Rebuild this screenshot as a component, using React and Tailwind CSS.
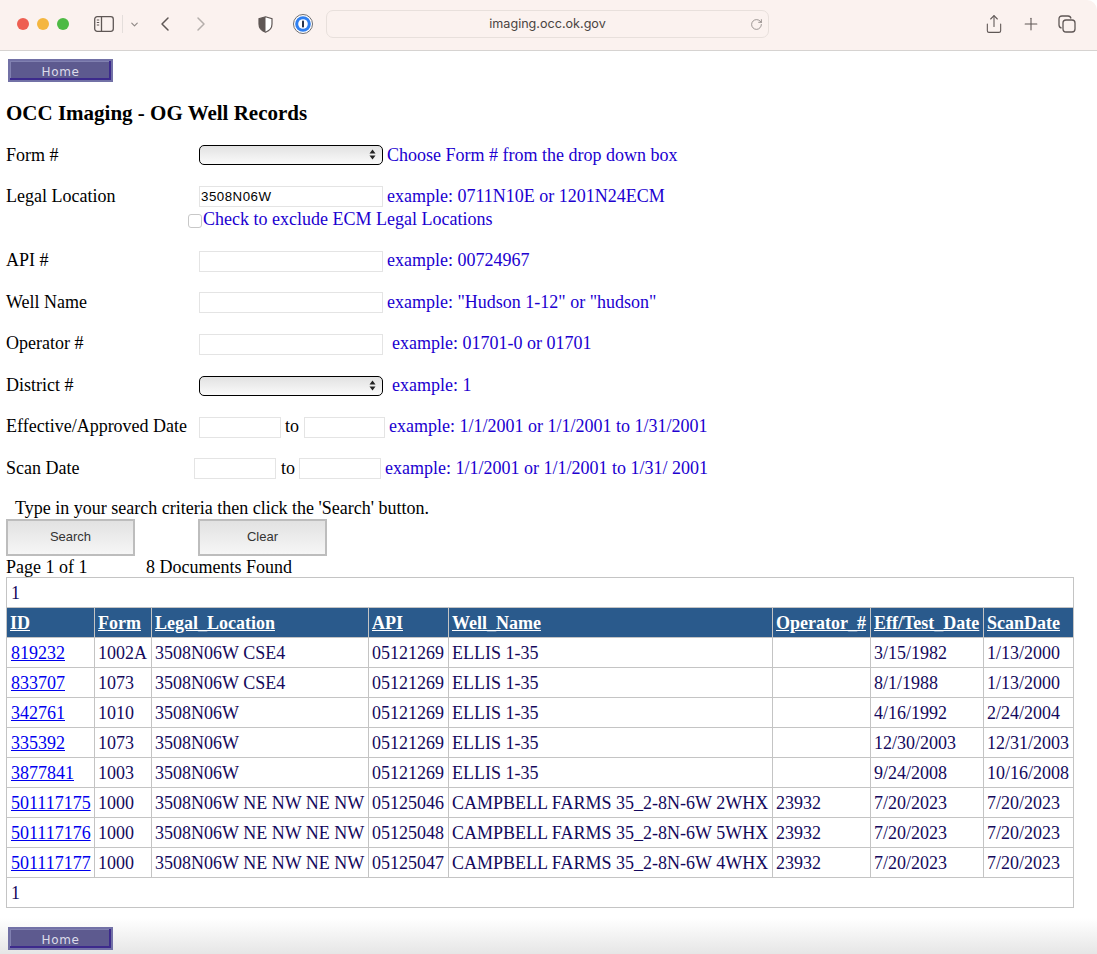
import { ChevronDown, ChevronLeft, ChevronRight, Plus, RotateCw, Share } from "lucide-react";

const records = [
  ["819232", "1002A", "3508N06W CSE4", "05121269", "ELLIS 1-35", "", "3/15/1982", "1/13/2000"],
  ["833707", "1073", "3508N06W CSE4", "05121269", "ELLIS 1-35", "", "8/1/1988", "1/13/2000"],
  ["342761", "1010", "3508N06W", "05121269", "ELLIS 1-35", "", "4/16/1992", "2/24/2004"],
  ["335392", "1073", "3508N06W", "05121269", "ELLIS 1-35", "", "12/30/2003", "12/31/2003"],
  ["3877841", "1003", "3508N06W", "05121269", "ELLIS 1-35", "", "9/24/2008", "10/16/2008"],
  ["501117175", "1000", "3508N06W NE NW NE NW", "05125046", "CAMPBELL FARMS 35_2-8N-6W 2WHX", "23932", "7/20/2023", "7/20/2023"],
  ["501117176", "1000", "3508N06W NE NW NE NW", "05125048", "CAMPBELL FARMS 35_2-8N-6W 5WHX", "23932", "7/20/2023", "7/20/2023"],
  ["501117177", "1000", "3508N06W NE NW NE NW", "05125047", "CAMPBELL FARMS 35_2-8N-6W 4WHX", "23932", "7/20/2023", "7/20/2023"],
];

const headers = [
  ["ID", "w-[88px]"],
  ["Form", "w-[57px]"],
  ["Legal_Location", "w-[217px]"],
  ["API", "w-[80px]"],
  ["Well_Name", "w-[324px]"],
  ["Operator_#", "w-[98px]"],
  ["Eff/Test_Date", "w-[113px]"],
  ["ScanDate", "w-[90px]"],
];

const Toolbar = () => (
  <div className="h-[51px] pb-[2px] bg-[#fbf2ef] border-b border-[#d6d3d1] flex items-center rounded-tr-[10px] text-[#5f5755] shrink-0">
    <div className="flex items-center gap-[8px] ml-[17px]">
      <span className="w-[12px] h-[12px] rounded-full bg-[#ee5f52]" />
      <span className="w-[12px] h-[12px] rounded-full bg-[#f4b63f]" />
      <span className="w-[12px] h-[12px] rounded-full bg-[#4dba45]" />
    </div>
    <svg className="ml-[25px]" width="20" height="16" viewBox="0 0 20 16" fill="none" stroke="#5f5755" strokeWidth="1.3">
      <rect x="0.7" y="0.7" width="18.6" height="14.6" rx="2.5" />
      <path d="M7.5 1v14" />
      <path d="M2.8 4h2.4M2.8 6.5h2.4M2.8 9h2.4" strokeWidth="1" />
    </svg>
    <span className="ml-[8px] w-px h-[18px] bg-[#e4dedb]" />
    <ChevronDown className="ml-[6px] text-[#8f8986]" size={11} strokeWidth={2.5} />
    <ChevronLeft className="ml-[13px]" size={24} strokeWidth={1.5} />
    <ChevronRight className="ml-[12px] text-[#b4aeab]" size={24} strokeWidth={1.5} />
    <svg className="ml-[45px]" width="15" height="17" viewBox="0 0 15 17">
      <path d="M7.5 0.8 L14 2.8 V8 C14 12 11 15 7.5 16.2 C4 15 1 12 1 8 V2.8 Z" fill="#fff" stroke="#5f5755" strokeWidth="1.2" />
      <path d="M7.5 0.8 L1 2.8 V8 C1 12 4 15 7.5 16.2 Z" fill="#5f5755" />
    </svg>
    <svg className="ml-[20px]" width="20" height="20" viewBox="0 0 20 20">
      <circle cx="10" cy="10" r="9.5" fill="#fff" stroke="#6d6d70" strokeWidth="1" />
      <circle cx="10" cy="10" r="7.8" fill="#2f7ff0" />
      <circle cx="10" cy="10" r="4.8" fill="#fff" />
      <rect x="9" y="6.5" width="2" height="7" rx="0.8" fill="#26324a" />
    </svg>
    <div className="ml-[13px] w-[443px] h-[28px] rounded-[7px] border border-[#e8e0dc] bg-[#fbf2ef] flex items-center relative">
      <span className="flex-1 text-center text-[12.6px] text-[#4a4442] font-['Inter',sans-serif]">imaging.occ.ok.gov</span>
      <RotateCw className="absolute right-[5px] text-[#7f7977]" size={13} strokeWidth={1.4} />
    </div>
    <Share className="ml-[215px]" size={20} strokeWidth={1.3} />
    <Plus className="ml-[17px]" size={20} strokeWidth={1.3} />
    <svg className="ml-[17px]" width="18" height="18" viewBox="0 0 18 18" fill="none" stroke="#5f5755" strokeWidth="1.3">
      <rect x="5" y="5" width="12" height="12" rx="3" />
      <path d="M13 3.5 C12.7 2 11.8 1 10 1 H4 C2 1 1 2 1 4 V10 C1 11.8 2 12.7 3.5 13" />
    </svg>
  </div>
);

const HomeButton = () => (
  <a className="block w-[105px] h-[23px] bg-[#5d5a8f] border-2 border-[#7271a6] shadow-[inset_-2px_-2px_0_#3c2a8c,inset_1px_1px_0_#8080b0] text-center text-[12px] leading-[23px] tracking-[0.6px] text-[#dcdcea] font-['DejaVu_Sans',sans-serif]">
    Home
  </a>
);

const Hint = ({ className = "", lift = "pb-[2px]", children }) => (
  <span className={`text-[#2000d0] ${lift} ${className}`}>{children}</span>
);

const TextBox = ({ className = "w-[184px]", value = "" }) => (
  <input
    readOnly
    value={value}
    className={`h-[21px] bg-white border border-[#e4e4e4] px-[1px] text-[13.3px] tracking-[0.5px] text-black font-['Liberation_Sans',sans-serif] ${className}`}
  />
);

const SelectBox = () => (
  <span className="w-[184px] h-[20px] rounded-[5px] border border-black bg-gradient-to-b from-[#e2e2e2] via-[#eeeeee] to-[#fafafa] flex items-center justify-end pr-[6px]">
    <svg width="7" height="11" viewBox="0 0 7 11" fill="#222">
      <path d="M3.5 0.5 L6.5 4.5 H0.5 Z M3.5 10.5 L0.5 6.5 H6.5 Z" />
    </svg>
  </span>
);

const Row = ({ label, children, labelWidth = "w-[193px]", lift = "pb-[2px]" }) => (
  <div className="flex items-center h-[41.5px]">
    <span className={`${labelWidth} shrink-0 text-black ${lift}`}>{label}</span>
    {children}
  </div>
);

export default function App() {
  return (
    <div className="w-[1097px] h-[954px] overflow-hidden flex flex-col bg-white font-['Liberation_Serif',serif] text-[18px] leading-[20px]">
      <Toolbar />
      <div className="pl-[8px] pt-[8px]">
        <HomeButton />
      </div>
      <div className="pl-[6px]">
        <h1 className="font-bold text-[21px] leading-[24px] mt-[19px] mb-[9px] text-black">OCC Imaging - OG Well Records</h1>

        <Row label="Form #" lift="">
          <SelectBox />
          <Hint className="ml-[4px]" lift="">Choose Form # from the drop down box</Hint>
        </Row>
        <Row label="Legal Location" lift="">
          <TextBox value="3508N06W" />
          <Hint className="ml-[4px]" lift="">example: 0711N10E or 1201N24ECM</Hint>
        </Row>
        <div className="flex items-center h-[3px] pl-[182px] mb-[3px] relative">
          <span className="w-[14px] h-[14px] mt-[5px] rounded-[3px] border border-[#c8c8c8] bg-white shrink-0" />
          <Hint className="ml-[1px]" lift="">Check to exclude ECM Legal Locations</Hint>
        </div>
        <div className="h-[17.5px]" />
        <Row label="API #">
          <TextBox />
          <Hint className="ml-[4px]">example: 00724967</Hint>
        </Row>
        <Row label="Well Name">
          <TextBox />
          <Hint className="ml-[4px]">example: "Hudson 1-12" or "hudson"</Hint>
        </Row>
        <Row label="Operator #">
          <TextBox />
          <Hint className="ml-[9px]">example: 01701-0 or 01701</Hint>
        </Row>
        <Row label="District #">
          <SelectBox />
          <Hint className="ml-[9px]">example: 1</Hint>
        </Row>
        <Row label="Effective/Approved Date">
          <TextBox className="w-[82px]" />
          <span className="ml-[4px] mr-[4px] w-[15px] text-black pb-[2px]">to</span>
          <TextBox className="w-[81px]" />
          <Hint className="ml-[4px]">example: 1/1/2001 or 1/1/2001 to 1/31/2001</Hint>
        </Row>
        <Row label="Scan Date" labelWidth="w-[188px]">
          <TextBox className="w-[82px]" />
          <span className="ml-[5px] mr-[4px] w-[14px] text-black pb-[2px]">to</span>
          <TextBox className="w-[82px]" />
          <Hint className="ml-[4px]">example: 1/1/2001 or 1/1/2001 to 1/31/ 2001</Hint>
        </Row>

        <p className="pl-[9px] text-black mt-[8.5px] mb-[1px]">Type in your search criteria then click the 'Search' button.</p>
        <div className="flex gap-[63px]">
          {["Search", "Clear"].map((label) => (
            <span
              key={label}
              className="w-[129px] h-[37px] pb-[2px] border-2 border-[#bdbdbd] bg-gradient-to-b from-[#e2e2e2] to-[#f6f6f6] flex items-center justify-center text-[13px] text-[#333] font-['Liberation_Sans',sans-serif]"
            >
              {label}
            </span>
          ))}
        </div>
        <div className="flex text-black mt-[1px]">
          <span className="w-[140px]">Page 1 of 1</span>
          <span>8 Documents Found</span>
        </div>

        <table className="w-[1067px] table-fixed border-collapse text-[#14095c]">
          <colgroup>
            {headers.map(([name, width]) => (
              <col key={name} className={width} />
            ))}
          </colgroup>
          <tbody>
            <tr className="h-[30px]">
              <td colSpan={8} className="border border-[#c4c4c4] px-[4px]">1</td>
            </tr>
            <tr className="h-[30px] bg-[#2a5a8c]">
              {headers.map(([name]) => (
                <td key={name} className="border border-[#c4c4c4] px-[3px] font-bold text-white underline whitespace-nowrap">
                  {name}
                </td>
              ))}
            </tr>
            {records.map((rec) => (
              <tr key={rec[0]} className="h-[30px]">
                {rec.map((val, i) => (
                  <td key={i} className="border border-[#c4c4c4] px-[3px] whitespace-nowrap">
                    {i === 0 ? <a className="ml-[1px] text-[#0000ee] underline">{val}</a> : val}
                  </td>
                ))}
              </tr>
            ))}
            <tr className="h-[30px]">
              <td colSpan={8} className="border border-[#c4c4c4] px-[4px]">1</td>
            </tr>
          </tbody>
        </table>
      </div>
      <div className="flex-1 mt-[10px] pl-[8px] pt-[9px] bg-gradient-to-b from-white to-[#e6e6e6]">
        <HomeButton />
      </div>
    </div>
  );
}
